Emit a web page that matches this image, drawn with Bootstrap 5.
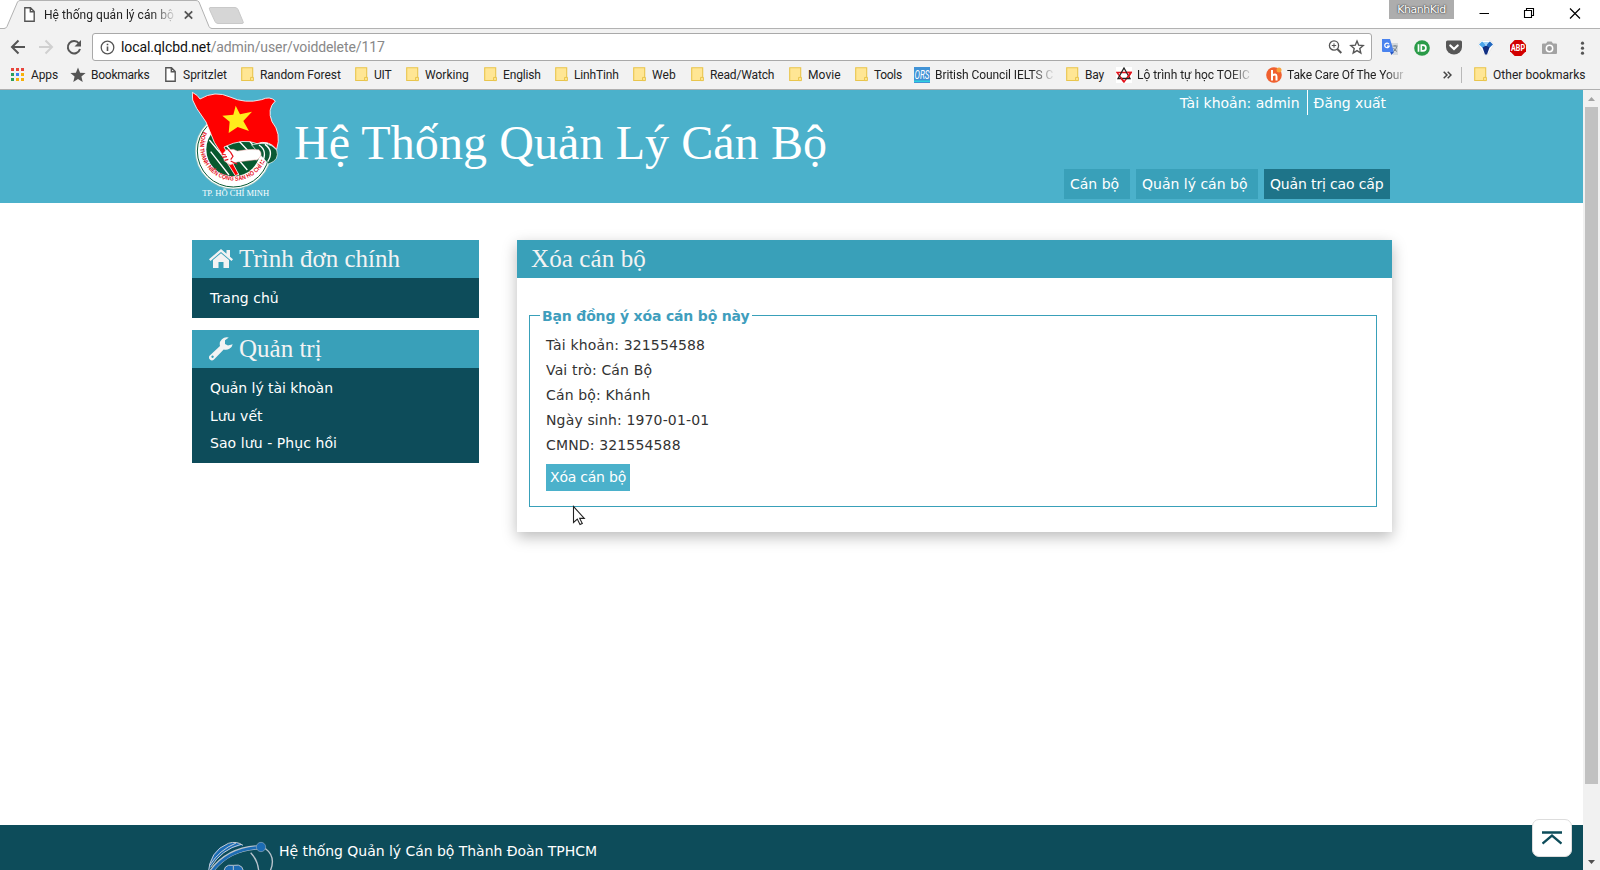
<!DOCTYPE html>
<html lang="vi">
<head>
<meta charset="utf-8">
<meta name="viewport" content="width=device-width, initial-scale=1">
<title>Hệ thống quản lý cán bộ</title>
<link href="https://cdn.jsdelivr.net/npm/bootstrap@5.3.0/dist/css/bootstrap.min.css" rel="stylesheet">
<style>
body{font:14px/24px "DejaVu Sans",Verdana,sans-serif;color:#333;height:870px;overflow:hidden;background:#fff}
svg{display:block;flex:none}
.serif{font-family:"Liberation Serif","Times New Roman",serif}
/* browser window */
.chrome-ui{font-family:Roboto,sans-serif;font-size:12px;line-height:16px;color:#222;height:90px;border-bottom:1px solid #b0b0b0;background:#f2f2f2}
.tabstrip{height:29px;background:#fff;border-bottom:1px solid #b2b2b2}
.tab-shape{position:absolute;left:0;top:0}
.tab-label{padding:7px 0 0 24px;gap:9px;width:200px}
.tab-text{width:131px;overflow:hidden;white-space:nowrap}
.fade-end{-webkit-mask-image:linear-gradient(90deg,#000 82%,rgba(0,0,0,.1));mask-image:linear-gradient(90deg,#000 82%,rgba(0,0,0,.1));overflow:hidden}
.user-chip{width:65px;height:19px;background:#adadad;color:#fff;font:11px/19px "DejaVu Sans",sans-serif;letter-spacing:-.45px;text-shadow:0 0 2px #333,0 0 1px #444;margin-right:25px}
.toolbar-row{height:33px;padding-left:10px;padding-top:4px}
.omni{width:1280px;height:28px;border:1px solid #a9a9a9;border-radius:3px;padding:0 6px 0 7px;margin-left:10px}
.url{font-size:14px;letter-spacing:-.11px;margin-left:6px;line-height:26px;color:#888}
.url b{font-weight:400;color:#111}
.ext{display:grid;grid-template-columns:32px 32px 32px 32px 32px 32px 20px;padding-left:10px}
.bookmarks{height:25px;display:grid;align-items:center;padding-left:11px;grid-template-columns:59px 95px 76px 114px 51px 78px 71px 78px 58px 98px 66px 59px 152px 50px 150px 177px 18px 13px 126px}
.bm{display:flex;align-items:center;white-space:nowrap}
.bm>i{width:19px;flex:none}
/* page */
.viewport-row{height:780px}
.page{width:1583px}
.wrap{width:1200px;margin-left:192px}
.masthead{height:113px;background:#4bb1cb;color:#fff}
.site-title{font-size:48px;line-height:56px;letter-spacing:.09px;margin:25px 0 0 12px}
.account{height:25px;line-height:26px;margin-right:6px}
.account span+span{border-left:1px solid #fff;padding-left:6px;margin-left:7px;letter-spacing:-.05px}
.topnav{gap:6px;margin-right:2px;margin-bottom:4px}
.topnav a{height:30px;line-height:30px;padding:0 6px;background:#39a0b9;color:#fff;text-decoration:none;white-space:nowrap}
.topnav a.active{background:#1e7489;letter-spacing:-.15px}
.side{width:287px}
.side-head{height:38px;background:#39a0b9;color:#f3f3f3;font-size:25px;padding-left:17px;gap:6px;letter-spacing:0}
.side-list{background:#0d4c5a;padding:6px 18px 6.5px;color:#fff}
.side-list a{display:block;height:27.5px;line-height:28px;color:#fff;text-decoration:none;letter-spacing:.02px}
.panel{width:875px;height:292px;box-shadow:0 5px 14px rgba(0,0,0,.27)}
.panel-head{height:38px;line-height:38px;background:#39a0b9;color:#f3f3f3;font-size:25px;padding-left:14px;letter-spacing:.1px}
.confirm{width:848px;height:204px;border:1px solid #39a0b9;margin:25px 0 0 12px;padding:0 16px;line-height:25px;letter-spacing:.15px}
.confirm legend{float:none;width:auto;font-size:14px;font-weight:700;line-height:24px;color:#3f9ebd;padding:1px 3px 0 2px;margin:0 0 5px -6px;letter-spacing:-.17px}
.btn-del{border-radius:0;border:0;background:#4bb1cb;color:#fff;font-size:14px;line-height:27px;padding:0;width:84px;height:27px;letter-spacing:-.23px;margin-top:6px}
.btn-del:hover{background:#4bb1cb;color:#fff}
.foot{height:45px;background:#0d4c5a;color:#fff;overflow:hidden}
.foot span{letter-spacing:-.04px;margin-top:14px}
.scroll{width:17px;background:#f1f1f1}
.thumb{width:13px;height:677px;background:#c1c1c1;margin-left:2px}
.to-top{position:absolute;left:1532px;top:819px;width:40px;height:38px;background:#fff;border:1px solid #ddd;border-radius:7px}
.pointer{position:absolute;left:572px;top:505px}
</style>
</head>
<body class="d-flex flex-column">
<svg width="0" height="0" style="display:none">
  <symbol id="folder" viewBox="0 0 13 15"><path d="M.7.7h11v12.800H.7z" fill="#ffe694" stroke="#e9c54c" stroke-width="1.100"/><path d="M9.600 13.600v-3.200h2.800v3.200z" fill="#ffe694" stroke="#e9c54c"/></symbol>
  <symbol id="doc" viewBox="0 0 11 15"><path d="M.8.8h5.700l3.700 3.700v9.700H.8zM6.300.8v4h4" fill="#fff" stroke="#555" stroke-width="1.400"/></symbol>
</svg>

<header class="chrome-ui flex-shrink-0">
  <div class="tabstrip d-flex justify-content-between position-relative">
    <svg class="tab-shape" width="260" height="29"><path d="M0 28.500h4q2 0 3-2L17.500 2Q18.500.5 20 .5H196q2 0 3 1.500L209 26.500q1 2 3 2V29H0z" fill="#f2f2f2"/><path d="M0 28.500h4q2 0 3-2L17.500 2Q18.500.5 20 .5H196q2 0 3 1.500L209 26.500q1 2 3 2" fill="none" stroke="#b2b2b2"/><path d="M210 7.500h25q2 0 3 2l5 12q1 2-1 2h-24q-2 0-3-2l-5.500-12q-.5-2 .5-2z" fill="#d6d6d6" stroke="#c9c9c9"/></svg>
    <div class="tab-label d-flex position-relative">
      <svg width="11" height="15"><use href="#doc"/></svg>
      <span class="tab-text fade-end" style="letter-spacing:.05px">Hệ thống quản lý cán bộ</span>
      <svg width="9" height="16" viewBox="0 0 9 16"><path d="M.8 4.300l7.400 7.400M8.200 4.300L.8 11.700" stroke="#555" stroke-width="1.800"/></svg>
    </div>
    <div class="d-flex">
      <div class="user-chip text-center">KhanhKid</div>
      <svg width="121" height="28" viewBox="1479 0 121 28" fill="none" stroke="#000"><path d="M1479.500 13.500h9.500M1524.500 10.500h7v7h-7zM1526.500 10.500v-2h7v7h-2" stroke-width="1.100"/><path d="M1570 8.500l10 10M1580 8.500l-10 10" stroke-width="1.200"/></svg>
    </div>
  </div>

  <div class="toolbar-row d-flex">
    <svg width="72" height="28" viewBox="10 33 72 28" fill="none" stroke-width="2"><path d="M25 47H12.500M18.500 40.500L12 47l6.500 6.500" stroke="#555"/><path d="M39 47h12.500M45.500 40.500L52 47l-6.500 6.500" stroke="#d0d0d0"/><path d="M79 43.500a6.200 6.200 0 1 0 1 5.500" stroke="#555"/><path d="M81 40v6.500h-6.500z" fill="#555"/></svg>
    <div class="omni bg-white d-flex align-items-center">
      <svg width="15" height="15" viewBox="0 0 15 15"><circle cx="7.500" cy="7.500" r="6.300" fill="none" stroke="#555" stroke-width="1.300"/><path d="M7.500 6.500V11M7.500 3.700v1.600" stroke="#555" stroke-width="1.600"/></svg>
      <span class="url flex-grow-1"><b>local.qlcbd.net</b>/admin/user/voiddelete/117</span>
      <svg width="38" height="18" viewBox="0 0 38 18" fill="none" stroke="#555"><circle cx="7" cy="7.500" r="4.600" stroke-width="1.300"/><path d="M10.300 11l4 4" stroke-width="1.900"/><path d="M4.800 7.500h4.400M7 5.300v4.400"/><path d="M30 3l1.700 4.200 4.500.4-3.400 3 1 4.400L30 12.600 26.200 15l1-4.400-3.400-3 4.500-.4z" stroke-width="1.400"/></svg>
    </div>
    <div class="ext align-items-center">
      <svg width="17" height="17" viewBox="0 0 17 17"><path d="M6 4h10v12h-5z" fill="#d5d9dd"/><path d="M0 0h8l4 13H1q-1 0-1-1z" fill="#4a83ee"/><path d="M8 13h4l-2.500 3z" fill="#2455c4"/><path d="M10.500 7h5M13 6v1.500M11.500 12.500q3-2 3.200-5M11.500 9q1 2 3.500 3.500" stroke="#74818c" fill="none"/><path d="M7 5.200a2.300 2.300 0 1 0 .2 2H5" stroke="#fff" fill="none" stroke-width="1.200"/></svg>
      <svg width="16" height="16" viewBox="0 0 16 16"><circle cx="8" cy="8" r="7.800" fill="#2a9b48"/><path d="M4.500 4.200v7.600M7.300 5.100h1.700a2.900 2.900 0 0 1 0 5.800H7.300z" fill="none" stroke="#fff" stroke-width="1.700"/></svg>
      <svg width="16" height="15" viewBox="0 0 16 15"><path d="M1.500.5h13q1.500 0 1.500 1.500v5a8 7.500 0 0 1-16 0V2Q0 .5 1.500.5z" fill="#575757"/><path d="M4.300 5.500L8 9l3.700-3.500" fill="none" stroke="#fff" stroke-width="2.200" stroke-linecap="round"/></svg>
      <svg width="16" height="16" viewBox="0 0 16 16"><path d="M3.500.5h9L16 4.500 9.500 15h-3L0 4.500z" fill="#fff" stroke="#ddd" stroke-width=".6"/><path d="M4 1.500l4 2.500L6 9 1 4.500z" fill="#4aa4ea"/><path d="M12 1.500L8 4l2 5 5-4.500z" fill="#2168bf"/><path d="M4.500 7.500l3.500-2 3.500 2L9 14.500H7z" fill="#102f82"/><path d="M5 2h6L8 6z" fill="#a3d5fa"/></svg>
      <svg width="16" height="16" viewBox="0 0 16 16"><path d="M4.700 0h6.600L16 4.700v6.600L11.300 16H4.700L0 11.300V4.700z" fill="#d20000"/><text x="8" y="11.200" font-size="9" font-weight="700" fill="#fff" text-anchor="middle" textLength="14" lengthAdjust="spacingAndGlyphs" font-family="Roboto,sans-serif">ABP</text></svg>
      <svg width="15" height="14" viewBox="0 0 15 14"><path d="M1 2.500h3L5.500.5h4l1.500 2h3q1 0 1 1V12q0 1-1 1H1q-1 0-1-1V3.500q0-1 1-1z" fill="#a3a3a3"/><circle cx="7.500" cy="7.500" r="3.200" fill="#999" stroke="#fff" stroke-width="1.500"/></svg>
      <svg width="16" height="16" viewBox="0 0 16 16" fill="#555"><circle cx="8.500" cy="3.200" r="1.600"/><circle cx="8.500" cy="8.200" r="1.600"/><circle cx="8.500" cy="13.200" r="1.600"/></svg>
    </div>
  </div>

  <nav class="bookmarks">
    <div class="bm"><i style="width:20px"><svg width="13" height="13"><path d="M0 0h3v3H0zM5 0h3v3H5zM10 0h3v3h-3z" fill="#e8453c"/><path d="M0 5h3v3H0zM0 10h3v3H0z" fill="#2d9f5c"/><path d="M5 5h3v3H5z" fill="#3f82f5"/><path d="M10 5h3v3h-3zM5 10h3v3H5zM10 10h3v3h-3z" fill="#f7b10a"/></svg></i><span style="letter-spacing:-.13px">Apps</span></div>
    <div class="bm"><i style="width:21px"><svg width="16" height="16" viewBox="0 0 16 16"><path d="M8 .6l2.100 5.100 5.500.4-4.200 3.500 1.300 5.400L8 12.100 3.300 15l1.300-5.400L.4 6.100l5.500-.4z" fill="#555"/></svg></i><span style="letter-spacing:-.25px">Bookmarks</span></div>
    <div class="bm"><i style="width:18px"><svg width="11" height="15"><use href="#doc"/></svg></i><span>Spritzlet</span></div>
    <div class="bm"><i><svg width="13" height="15"><use href="#folder"/></svg></i><span style="letter-spacing:-.05px">Random Forest</span></div>
    <div class="bm"><i><svg width="13" height="15"><use href="#folder"/></svg></i><span style="letter-spacing:-.2px">UIT</span></div>
    <div class="bm"><i><svg width="13" height="15"><use href="#folder"/></svg></i><span>Working</span></div>
    <div class="bm"><i><svg width="13" height="15"><use href="#folder"/></svg></i><span style="letter-spacing:-.15px">English</span></div>
    <div class="bm"><i><svg width="13" height="15"><use href="#folder"/></svg></i><span style="letter-spacing:-.15px">LinhTinh</span></div>
    <div class="bm"><i><svg width="13" height="15"><use href="#folder"/></svg></i><span style="letter-spacing:.1px">Web</span></div>
    <div class="bm"><i><svg width="13" height="15"><use href="#folder"/></svg></i><span style="letter-spacing:-.15px">Read/Watch</span></div>
    <div class="bm"><i><svg width="13" height="15"><use href="#folder"/></svg></i><span style="letter-spacing:.1px">Movie</span></div>
    <div class="bm"><i><svg width="13" height="15"><use href="#folder"/></svg></i><span style="letter-spacing:-.3px">Tools</span></div>
    <div class="bm"><i style="width:21px"><svg width="16" height="16"><path d="M0 0h16v16H0z" fill="#4193d6"/><path d="M0 13.500h16V15H0z" fill="#2fd0e0"/><text x="8" y="11.500" font-size="13" fill="#fff" text-anchor="middle" textLength="15" lengthAdjust="spacingAndGlyphs" font-family="Roboto,sans-serif">ORS</text></svg></i><span class="fade-end" style="width:118px;letter-spacing:-.08px">British Council IELTS C</span></div>
    <div class="bm"><i><svg width="13" height="15"><use href="#folder"/></svg></i><span style="letter-spacing:-.2px">Bay</span></div>
    <div class="bm"><i style="width:21px"><svg width="16" height="16" viewBox="0 0 16 16" fill="none"><path d="M0 0h16v16H0z" fill="#fff"/><path d="M1 5.500h14L8 15z" stroke="#e3131c" stroke-width="1.400"/><path d="M8 1l6 10.500H2z" stroke="#222" stroke-width="1.300"/><path d="M11 5.500h4l-3 5M5 11l3 4" stroke="#e3131c" stroke-width="1.600"/></svg></i><span class="fade-end" style="width:114px;letter-spacing:-.03px">Lộ trình tự học TOEIC</span></div>
    <div class="bm"><i style="width:21px"><svg width="17" height="16" viewBox="0 0 17 16"><circle cx="8" cy="8" r="7.800" fill="#f0602f"/><circle cx="13" cy="3" r="2.500" fill="#f7a13c"/><path d="M6 3v10.500M6 8.500q4.500-2.500 4.500 1v4" fill="none" stroke="#fff" stroke-width="2"/></svg></i><span class="fade-end" style="width:119px;letter-spacing:-.12px">Take Care Of The Your</span></div>
    <svg width="9" height="8" viewBox="0 0 9 8"><path d="M.7.7L4 4 .7 7.300M4.700.7L8 4 4.700 7.300" fill="none" stroke="#444" stroke-width="1.500"/></svg>
    <svg width="1" height="16"><path d="M0 0h1v16H0z" fill="#b8b8b8"/></svg>
    <div class="bm"><i><svg width="13" height="15"><use href="#folder"/></svg></i><span style="letter-spacing:.03px">Other bookmarks</span></div>
  </nav>
</header>

<div class="viewport-row d-flex">
  <div class="page d-flex flex-column">
    <header class="masthead">
      <div class="wrap d-flex h-100">
        <svg width="90" height="110" viewBox="36 15 270 330">
          <circle cx="160" cy="198" r="114" fill="#fff" stroke="#9cc4b8" stroke-width="2"/>
          <circle cx="160" cy="198" r="108" fill="none" stroke="#0a5a36" stroke-width="3"/>
          <circle cx="160" cy="193" r="81" fill="#07592f"/>
          <path d="M88 165l88 105M112 150l90 105M92 200l55 70M160 150l70 75M185 140l50 60" stroke="#fff" stroke-width="4"/>
          <path id="ring" d="M70 140A101 101 0 1 0 256 228" fill="none"/>
          <text font-family="Liberation Sans,sans-serif" font-size="18" font-weight="700" fill="#e5101c"><textPath href="#ring" textLength="350" lengthAdjust="spacingAndGlyphs">ĐOÀN THANH NIÊN CỘNG SẢN HỒ CHÍ MINH</textPath></text>
          <path d="M215 180q50-15 75 15 10 30-25 42z" fill="#0a5a36" stroke="#fff" stroke-width="2"/>
          <path d="M237 180q28 18 8 55M255 178q28 20 8 52" fill="none" stroke="#fff" stroke-width="4"/>
          <path d="M37 22L51 31 60 42Q105 15 150 36T245 44Q270 32 286 48 260 72 276 110 305 145 290 193 265 163 231 176 190 158 132 186L176 268 166 272 103 172 78 111 50 70 38 45z" fill="#f00" stroke="#fff" stroke-width="2.500"/>
          <path d="M127 208l12-14 21-1 12 5q35-7 65-4 15 15-5 30l-60 7-22 9-17-12z" fill="#fff" stroke="#e8a0a0" stroke-width="1.500"/>
          <path d="M125 207l13 3M127 217l14-2M134 226l11-3M143 193l9 9 7 12-7 10M152 228l20 10" stroke="#e5101c" stroke-width="3.500" fill="none"/>
          <path d="M167 62l13 26 36-8-26 28 17 30-34-12-27 18 3-34-22-18 33-3z" fill="#ffed1c"/>
          <text x="167" y="332" text-anchor="middle" textLength="201" lengthAdjust="spacingAndGlyphs" font-family="Liberation Serif,serif" font-size="22" fill="#fff">TP. HỒ CHÍ MINH</text>
        </svg>
        <h1 class="site-title serif fw-normal text-nowrap">Hệ Thống Quản Lý Cán Bộ</h1>
        <div class="ms-auto d-flex flex-column justify-content-between align-items-end">
          <div class="account d-flex text-nowrap"><span>Tài khoản: admin</span><span>Đăng xuất</span></div>
          <nav class="topnav d-flex"><a style="width:66px">Cán bộ</a><a style="width:122px">Quản lý cán bộ</a><a class="active" style="width:126px">Quản trị cao cấp</a></nav>
        </div>
      </div>
    </header>

    <main class="wrap d-flex justify-content-between align-items-start flex-grow-1" style="padding-top:37px">
      <aside class="side d-flex flex-column" style="gap:12px">
        <section>
          <div class="side-head serif d-flex align-items-center"><svg width="24" height="20" viewBox="0 0 24 20" fill="#f3f3f3"><path d="M12 0l5.500 4.700V1H21v6.700l3 2.600-1.500 1.700L12 3 1.500 12 0 10.300z"/><path d="M12 4.200l8 6.800v8h-5.500v-6h-5v6H4v-8z"/></svg><span>Trình đơn chính</span></div>
          <div class="side-list"><a>Trang chủ</a></div>
        </section>
        <section>
          <div class="side-head serif d-flex align-items-center"><svg width="24" height="24" viewBox="0 0 24 24"><path fill-rule="evenodd" d="M23.700 7.200a7 7 0 0 1-9 5.300L5 22.500a2.800 2.800 0 0 1-4.200-4L11 9a7 7 0 0 1 8.800-8.500L16 3.300v3.600l3 1.700zM3.500 18.500a1.200 1.200 0 1 0 .1 0z" fill="#f3f3f3"/></svg><span>Quản trị</span></div>
          <div class="side-list"><a style="letter-spacing:-.05px">Quản lý tài khoàn</a><a>Lưu vết</a><a style="letter-spacing:.07px">Sao lưu - Phục hồi</a></div>
        </section>
      </aside>
      <section class="panel bg-white">
        <div class="panel-head serif">Xóa cán bộ</div>
        <fieldset class="confirm">
          <legend>Bạn đồng ý xóa cán bộ này</legend>
          <div>Tài khoản: 321554588</div>
          <div>Vai trò: Cán Bộ</div>
          <div>Cán bộ: Khánh</div>
          <div>Ngày sinh: 1970-01-01</div>
          <div>CMND: 321554588</div>
          <button class="btn btn-del d-block">Xóa cán bộ</button>
        </fieldset>
      </section>
    </main>

    <footer class="foot">
      <div class="wrap d-flex">
        <svg width="70" height="34" viewBox="78 93 210 102" style="margin:16px 3px 0 14px" fill="none">
          <path d="M85 182Q92 112 155 98q20-3 34 8Q140 112 100 158z" fill="#1c6cb4"/>
          <path d="M84 195Q88 122 145 100q25-8 44 6M92 172Q125 118 183 103M90 165Q118 120 168 99" stroke="#c3ccd5" stroke-width="3"/>
          <path d="M90 190Q140 116 235 112" stroke="#b9c4cd" stroke-width="13"/><path d="M90 192Q140 118 238 112" stroke="#1c6cb4" stroke-width="8"/>
          <path d="M212 128q25 25 25 70M255 115q40 30 8 82" stroke="#b9c4cd" stroke-width="4"/>
          <circle cx="243" cy="111" r="14" fill="#1c6cb4" stroke="#8ea7bd" stroke-width="2"/>
          <path d="M132 198q-5-38 28-32 35-7 30 32z" fill="#1c6cb4" stroke="#b9c4cd" stroke-width="3"/><path d="M160 167v20" stroke="#b9c4cd" stroke-width="3"/>
        </svg>
        <span>Hệ thống Quản lý Cán bộ Thành Đoàn TPHCM</span>
      </div>
    </footer>
  </div>
  <div class="scroll d-flex flex-column">
    <svg width="17" height="17"><path d="M5 11h7L8.500 7z" fill="#a3a3a3"/></svg>
    <div class="thumb"></div>
    <svg class="mt-auto" width="17" height="17"><path d="M5 7h7l-3.500 4z" fill="#505050"/></svg>
  </div>
</div>

<a class="to-top d-flex align-items-center justify-content-center"><svg width="20" height="14" viewBox="0 0 20 14"><path d="M0 1.500h20M.5 12.500L10 4.500l9.500 8" fill="none" stroke="#0d4c5a" stroke-width="2.300"/></svg></a>
<svg class="pointer" width="14" height="21" viewBox="0 0 14 21"><path d="M1.500 1.500v16l3.800-3.400 2.700 5.400 2.300-1.100-2.600-5h4.600z" fill="#fff" stroke="#222" stroke-width="1.100"/></svg>
<script src="https://cdn.jsdelivr.net/npm/bootstrap@5.3.0/dist/js/bootstrap.bundle.min.js"></script>
</body>
</html>
